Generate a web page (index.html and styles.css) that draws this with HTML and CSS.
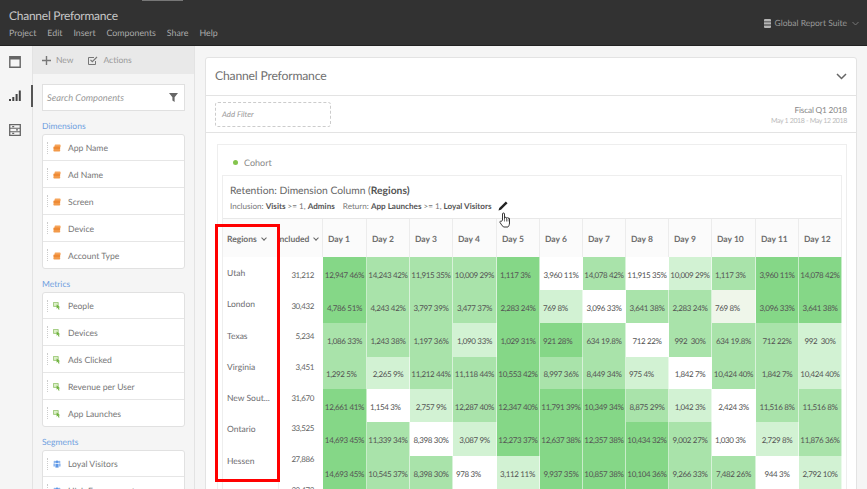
FILE: index.html
```html
<!DOCTYPE html>
<html lang="en">
<head>
    <meta charset="UTF-8">
    <title>Channel Preformance</title>
    <link rel="stylesheet" href="styles.css">
</head>
<body>

<svg class="sprites" width="0" height="0">
    <symbol id="i-dim" viewBox="0 0 10 10">
        <path d="M3 0.500h5.500a1 1 0 0 1 1 1v1.500a1 1 0 0 1-1 1H3a1 1 0 0 1-1-1V1.500a1 1 0 0 1 1-1z" fill="#f6a45a"/>
        <path d="M1.500 3.200h6.500a1 1 0 0 1 1 1v1.300a1 1 0 0 1-1 1H1.500a1 1 0 0 1-1-1V4.200a1 1 0 0 1 1-1z" fill="#ee8a35"/>
        <path d="M1.500 6.200h6.500a1 1 0 0 1 1 1v1.300a1 1 0 0 1-1 1H1.500a1 1 0 0 1-1-1V7.200a1 1 0 0 1 1-1z" fill="#f29a4a"/>
    </symbol>
    <symbol id="i-metric" viewBox="0 0 10 10">
        <path d="M0.500 0.500h6v5h-6z" fill="#dcefc8" stroke="#8cc063"/>
        <path d="M4.500 3l4.500 3.500-2 0.300 1.300 2.400-1.200 0.500-1.200-2.400-1.400 1.200z" fill="#6fb23e"/>
    </symbol>
    <symbol id="i-seg" viewBox="0 0 10 10">
        <circle cx="2.200" cy="2.500" r="1.500" fill="#8fb7ee"/>
        <circle cx="7.800" cy="2.500" r="1.500" fill="#8fb7ee"/>
        <circle cx="5" cy="2.300" r="1.800" fill="#5d97e6"/>
        <path d="M0.500 4.500h2v3.500h-2zM7.500 4.500h2v3.500h-2z" fill="#8fb7ee"/>
        <path d="M3 4.800h4v4.700H3z" fill="#5d97e6"/>
    </symbol>
</svg>

<div class="app">
    <header class="topbar">
        <span class="topbar-tab"></span>
        <div class="topbar-left">
            <div class="app-title">Channel Preformance</div>
            <nav class="menu">
                <span>Project</span>
                <span>Edit</span>
                <span>Insert</span>
                <span>Components</span>
                <span>Share</span>
                <span>Help</span>
            </nav>
        </div>
        <div class="suite">
            <svg width="7" height="9" viewBox="0 0 7 9"><path d="M1 0h5a1 1 0 0 1 1 1v1.500H0V1a1 1 0 0 1 1-1zM0 3.300h7v2.300H0zM0 6.400h7V8a1 1 0 0 1-1 1H1a1 1 0 0 1-1-1z" fill="#b5b5b5"/></svg>
            <span class="suite-name">Global Report Suite</span>
            <svg width="7" height="5" viewBox="0 0 7 5"><path d="M0.500 1l3 3 3-3" fill="none" stroke="#777" stroke-width="1"/></svg>
        </div>
    </header>

    <div class="workspace">
        <nav class="rail">
            <div class="rail-item">
                <svg width="12" height="12" viewBox="0 0 12 12"><path d="M0.800 0.800h10.400v10.400H0.800z" fill="none" stroke="#666" stroke-width="1.400"/><path d="M1 1h10v2.500H1z" fill="#666"/></svg>
            </div>
            <div class="rail-item rail-active">
                <svg width="12" height="12" viewBox="0 0 12 12"><path d="M0 9h2v2H0zM3.300 7h2v4h-2zM6.600 4h2v7h-2z" fill="#444"/><path d="M9.800 0.500h2V11h-2z" fill="#444"/></svg>
            </div>
            <div class="rail-item">
                <svg width="12" height="12" viewBox="0 0 12 12"><path d="M0.700 0.700h10.600v10.600H0.700z" fill="none" stroke="#666" stroke-width="1.300"/><path d="M1 4.200h10M1 7.800h10" stroke="#666" stroke-width="1.100"/><path d="M3.200 2h2v1.300h-2zM7 5.300h2v1.300H7zM3.200 8.800h2v1.300h-2z" fill="#666"/></svg>
            </div>
        </nav>

        <aside class="panel">
            <div class="panel-tools">
                <span class="tool">
                    <svg width="9" height="9" viewBox="0 0 9 9"><path d="M3.800 0h1.400v3.800H9v1.400H5.200V9H3.800V5.200H0V3.800h3.800z" fill="#777"/></svg>
                    New
                </span>
                <span class="tool">
                    <svg width="10" height="9" viewBox="0 0 10 9"><path d="M7.500 5v3.500h-7v-7H6" fill="none" stroke="#777"/><path d="M2.500 3.800l1.800 1.800L9 1" fill="none" stroke="#777" stroke-width="1.200"/></svg>
                    Actions
                </span>
            </div>
            <div class="panel-body">
                <div class="search">
                    <span>Search Components</span>
                    <svg width="9" height="9" viewBox="0 0 9 9"><path d="M0 0h9L5.600 4.200V9L3.400 7.500V4.200z" fill="#666"/></svg>
                </div>

                <div class="group-label">Dimensions</div>
                <div class="group">
                    <div class="item"><svg class="item-icon"><use href="#i-dim"/></svg>App Name</div>
                    <div class="item"><svg class="item-icon"><use href="#i-dim"/></svg>Ad Name</div>
                    <div class="item"><svg class="item-icon"><use href="#i-dim"/></svg>Screen</div>
                    <div class="item"><svg class="item-icon"><use href="#i-dim"/></svg>Device</div>
                    <div class="item"><svg class="item-icon"><use href="#i-dim"/></svg>Account Type</div>
                </div>

                <div class="group-label">Metrics</div>
                <div class="group">
                    <div class="item"><svg class="item-icon"><use href="#i-metric"/></svg>People</div>
                    <div class="item"><svg class="item-icon"><use href="#i-metric"/></svg>Devices</div>
                    <div class="item"><svg class="item-icon"><use href="#i-metric"/></svg>Ads Clicked</div>
                    <div class="item"><svg class="item-icon"><use href="#i-metric"/></svg>Revenue per User</div>
                    <div class="item"><svg class="item-icon"><use href="#i-metric"/></svg>App Launches</div>
                </div>

                <div class="group-label">Segments</div>
                <div class="group">
                    <div class="item"><svg class="item-icon"><use href="#i-seg"/></svg>Loyal Visitors</div>
                    <div class="item"><svg class="item-icon"><use href="#i-seg"/></svg>High Engagement</div>
                </div>
            </div>
        </aside>

        <main class="main">
            <section class="project">
                <div class="project-head">
                    <h1>Channel Preformance</h1>
                    <svg width="11" height="7" viewBox="0 0 11 7"><path d="M1 1l4.500 4.500L10 1" fill="none" stroke="#666" stroke-width="1.500"/></svg>
                </div>
                <div class="filter-row">
                    <div class="add-filter">Add Filter</div>
                    <div class="range">
                        <div class="range-name">Fiscal Q1 2018</div>
                        <div class="range-dates">May 1 2018 - May 12 2018</div>
                    </div>
                </div>

                <div class="cohort">
                    <div class="cohort-title"><span class="dot"></span>Cohort</div>
                    <div class="cohort-box">
                        <div class="retention">
                            <div class="retention-title">Retention: Dimension Column (<b>Regions)</b></div>
                            <div class="retention-sub">
                                Inclusion: <b>Visits</b> &gt;= 1, <b>Admins</b>
                                <span class="gap">Return:</span> <b>App Launches</b> &gt;= 1, <b>Loyal Visitors</b>
                                <svg class="pencil" width="10" height="10" viewBox="0 0 11 11"><path d="M8.600 0.500l1.900 1.900-7.200 7.200-2.800 0.900 0.900-2.800z" fill="#222"/></svg>
                            </div>
                        </div>

                        <div class="table">
                            <div class="col-regions">
                                <div class="th">Regions <i class="caret"></i></div>
                                <div class="region">Utah</div>
                                <div class="region">London</div>
                                <div class="region">Texas</div>
                                <div class="region">Virginia</div>
                                <div class="region">New Sout...</div>
                                <div class="region">Ontario</div>
                                <div class="region">Hessen</div>
                            </div>
                            <div class="col-included">
                                <div class="th th-included">Included <i class="caret"></i></div>
                                <div class="included">31,212</div>
                                <div class="included">30,432</div>
                                <div class="included">5,234</div>
                                <div class="included">3,451</div>
                                <div class="included">31,670</div>
                                <div class="included">33,525</div>
                                <div class="included">27,886</div>
                                <div class="included">32,473</div>
                            </div>
                            <div class="heat">
                                <div class="th">Day 1</div><div class="th">Day 2</div><div class="th">Day 3</div><div class="th">Day 4</div><div class="th">Day 5</div><div class="th">Day 6</div><div class="th">Day 7</div><div class="th">Day 8</div><div class="th">Day 9</div><div class="th">Day 10</div><div class="th">Day 11</div><div class="th">Day 12</div>

                                <div class="c g3">12,947 46%</div><div class="c g2">14,243 42%</div><div class="c g2">11,915 35%</div><div class="c g2">10,009 29%</div><div class="c g3 start">1,117 3%</div><div class="c">3,960 11%</div><div class="c g2">14,078 42%</div><div class="c">11,915 35%</div><div class="c g1">10,009 29%</div><div class="c g2 start">1,117 3%</div><div class="c g3">3,960 11%</div><div class="c g3">14,078 42%</div>

                                <div class="c g3">4,786 51%</div><div class="c g2">4,243 42%</div><div class="c g2">3,797 39%</div><div class="c g2">3,477 37%</div><div class="c g3">2,283 24%</div><div class="c g1 start">769 8%</div><div class="c">3,096 33%</div><div class="c g2">3,641 38%</div><div class="c g2">2,283 24%</div><div class="c g0 start">769 8%</div><div class="c g3">3,096 33%</div><div class="c g3">3,641 38%</div>

                                <div class="c g2">1,086 33%</div><div class="c g2">1,243 38%</div><div class="c g2">1,197 36%</div><div class="c g1">1,090 33%</div><div class="c g3">1,029 31%</div><div class="c g3 start">921 28%</div><div class="c g2">634 19.8%</div><div class="c">712 22%</div><div class="c g2">992&nbsp; 30%</div><div class="c g2">634 19.8%</div><div class="c g2">712 22%</div><div class="c g1">992&nbsp; 30%</div>

                                <div class="c g2 start">1,292 5%</div><div class="c g1">2,265 9%</div><div class="c g2">11,212 44%</div><div class="c g2">11,118 44%</div><div class="c g3">10,553 42%</div><div class="c g2">8,997 36%</div><div class="c g2">8,449 34%</div><div class="c g1 start">975 4%</div><div class="c">1,842 7%</div><div class="c g2">10,424 40%</div><div class="c g2">1,842 7%</div><div class="c g1">10,424 40%</div>

                                <div class="c g3">12,661 41%</div><div class="c start">1,154 3%</div><div class="c g1">2,757 9%</div><div class="c g2">12,287 40%</div><div class="c g3">12,347 40%</div><div class="c g3">11,791 39%</div><div class="c g3">10,349 34%</div><div class="c g2">8,875 29%</div><div class="c g1">1,042 3%</div><div class="c">2,424 3%</div><div class="c g2">11,516 8%</div><div class="c g2">11,516 8%</div>

                                <div class="c g3">14,693 45%</div><div class="c g2">11,339 34%</div><div class="c">8,398 30%</div><div class="c g1">3,087 9%</div><div class="c g3">12,273 37%</div><div class="c g3">12,637 38%</div><div class="c g3">12,357 38%</div><div class="c g3">10,434 32%</div><div class="c g2">9,002 27%</div><div class="c start">1,030 3%</div><div class="c g1">2,729 8%</div><div class="c g2">11,876 36%</div>

                                <div class="c g3">14,693 45%</div><div class="c g2">10,545 37%</div><div class="c g2">8,398 30%</div><div class="c start">978 3%</div><div class="c g1 start">3,112 11%</div><div class="c g3">9,937 35%</div><div class="c g3">10,857 38%</div><div class="c g3">10,104 36%</div><div class="c g2">9,266 33%</div><div class="c g2">7,482 26%</div><div class="c">944 3%</div><div class="c g1">2,792 10%</div>
                            </div>
                        </div>
                    </div>
                </div>
            </section>
        </main>
    </div>

    <!-- annotation laid over the screenshot -->
    <div class="callout"></div>
    <svg class="hand" width="12" height="16" viewBox="0 0 12 16"><path d="M3.500 8V2a1 1 0 0 1 2 0v4.500l0.500-1a1 1 0 0 1 1.500 0.300 1 1 0 0 1 1.500 0.400 1 1 0 0 1 1.500 0.800V11c0 2-1 3.500-1.500 4H4.500C3.500 14 1.800 12 1 10.500 0.600 9.500 1.800 8.600 2.600 9.300z" fill="#fff" stroke="#222" stroke-width="0.900"/><path d="M5.500 6.500v3M7.500 6v3.500M9 6.500v3" stroke="#222" stroke-width="0.600"/></svg>
</div>

</body>
</html>
```

FILE: styles.css
```css
* {
    box-sizing: border-box;
}
body {
    margin: 0;
    font-family: Lato, "Open Sans", sans-serif;
    color: #666;
    background-color: #f5f5f5;
    text-rendering: geometricPrecision;
}
.sprites {
    display: block;
    height: 0;
}
.app {
    position: relative;
    width: 867px;
    height: 489px;
    overflow: hidden;
    display: flex;
    flex-direction: column;
}

/* top bar */
.topbar {
    position: relative;
    height: 46px;
    flex: none;
    display: flex;
    justify-content: space-between;
    background-color: #323232;
    border-bottom: 1px solid #222;
    color: #bbb;
}
.topbar-tab {
    position: absolute;
    left: 142px;
    top: 0;
    width: 41px;
    height: 1px;
    background-color: #777;
}
.topbar-left {
    padding: 8px 0 0 9px;
}
.app-title {
    font-size: 12px;
    line-height: 15px;
    letter-spacing: -0.25px;
    color: #c8c8c8;
}
.menu {
    display: flex;
    gap: 11px;
    margin-top: 4px;
    font-size: 8.800px;
    line-height: 12px;
    color: #aaa;
}
.suite {
    display: flex;
    align-items: center;
    gap: 4px;
    height: 46px;
    padding: 0 8px 0 0;
    font-size: 8.500px;
    color: #999;
}
.suite-name {
    margin-right: 1px;
}

/* left side */
.workspace {
    flex: 1;
    display: flex;
    min-height: 0;
}
.rail {
    width: 33px;
    flex: none;
    padding-top: 5px;
    display: flex;
    flex-direction: column;
    gap: 12px;
    background-color: #f5f5f5;
    border-right: 1px solid #e3e3e3;
}
.rail-item {
    height: 22px;
    display: flex;
    align-items: center;
    padding-left: 9px;
}
.rail-active {
    border-right: 2px solid #555;
    margin-right: -1px;
}
.panel {
    width: 162px;
    flex: none;
    background-color: #f5f5f5;
    border-right: 1px solid #e3e3e3;
}
.panel-tools {
    height: 28px;
    display: flex;
    align-items: center;
    gap: 15px;
    padding-left: 9px;
    background-color: #e9e9e9;
    font-size: 8.500px;
    color: #999;
}
.tool {
    display: flex;
    align-items: center;
    gap: 5px;
}
.panel-body {
    padding: 10px 9px 0 9px;
}
.search {
    height: 27px;
    display: flex;
    align-items: center;
    justify-content: space-between;
    padding: 0 6px 0 4px;
    background-color: #fff;
    border: 1px solid #e0e0e0;
    font-size: 9.300px;
    font-style: italic;
    color: #999;
}
.group-label {
    margin-top: 8px;
    height: 15px;
    line-height: 15px;
    font-size: 8.500px;
    color: #6f9fe0;
}
.group {
    background-color: #fff;
    border: 1px solid #e1e1e1;
    border-radius: 3px;
}
.item {
    position: relative;
    height: 27px;
    display: flex;
    align-items: center;
    padding: 1px 0 0 10px;
    font-size: 8.600px;
    color: #777;
    border-bottom: 1px solid #e6e6e6;
}
.item:first-child {
    height: 26px;
}
.item:last-child {
    height: 26px;
    border-bottom: none;
}
.item::before {
    content: "";
    position: absolute;
    left: 4px;
    top: 7px;
    height: 12px;
    border-left: 1px dotted #ccc;
}
.item-icon {
    width: 8px;
    height: 8px;
    margin-right: 7px;
    flex: none;
}

/* main area */
.main {
    flex: 1;
    padding: 11px 10px 0 10px;
    min-width: 0;
}
.project {
    height: 500px;
    background-color: #fff;
    border: 1px solid #e3e3e3;
    border-radius: 3px;
}
.project-head {
    height: 38px;
    display: flex;
    align-items: center;
    justify-content: space-between;
    padding: 0 9px;
    border-bottom: 1px solid #e3e3e3;
}
.project-head h1 {
    margin: 0 0 2px;
    font-size: 12.200px;
    letter-spacing: -0.2px;
    font-weight: 400;
    color: #707070;
}
.filter-row {
    height: 37px;
    display: flex;
    align-items: center;
    justify-content: space-between;
    padding: 0 9px;
    border-bottom: 1px solid #e3e3e3;
}
.add-filter {
    width: 116px;
    height: 25px;
    line-height: 23px;
    padding-left: 6px;
    border: 1px dashed #ccc;
    border-radius: 3px;
    font-size: 7.800px;
    font-style: italic;
    color: #999;
}
.range {
    text-align: right;
    padding-top: 3px;
}
.range-name {
    font-size: 8.300px;
    letter-spacing: -0.2px;
    line-height: 11px;
    color: #888;
}
.range-dates {
    font-size: 7px;
    letter-spacing: -0.35px;
    line-height: 10px;
    color: #bbb;
}
.cohort {
    margin: 11px 9px 0 11px;
    height: 400px;
    border: 1px solid #eee;
}
.cohort-title {
    height: 30px;
    display: flex;
    align-items: center;
    padding: 4px 0 0 15px;
    font-size: 9px;
    color: #888;
}
.dot {
    width: 5px;
    height: 5px;
    margin-right: 6px;
    border-radius: 50%;
    background-color: #84c44d;
}
.cohort-box {
    margin: 0 4px;
    border: 1px solid #eee;
}
.retention {
    height: 43px;
    padding: 9px 0 0 7px;
    border-bottom: 1px solid #e8e8e8;
}
.retention-title {
    font-size: 10.300px;
    line-height: 13px;
    color: #666;
}
.retention-title b {
    color: #555;
}
.retention-sub {
    position: relative;
    margin-top: 3px;
    font-size: 8.100px;
    line-height: 11px;
    color: #777;
}
.retention-sub b {
    color: #555;
}
.gap {
    margin-left: 6px;
}
.pencil {
    position: absolute;
    left: 268px;
    top: 0;
}
.table {
    display: flex;
}
.th {
    height: 38px;
    display: flex;
    align-items: center;
    padding: 2px 0 0 5px;
    background-color: #fbfbfb;
    border-right: 1px solid #ececec;
    font-size: 8.500px;
    font-weight: 700;
    color: #6e6e6e;
    white-space: nowrap;
}
.col-regions {
    width: 56px;
    flex: none;
    border-right: 1px solid #eee;
}
.col-regions .th {
    padding-left: 4px;
}
.col-included {
    width: 44px;
    flex: none;
}
.th-included {
    margin-left: -2px;
    padding-left: 0;
}
.caret {
    display: inline-block;
    width: 4px;
    height: 4px;
    margin: 0 0 2px 5px;
    border-right: 1px solid #666;
    border-bottom: 1px solid #666;
    transform: rotate(45deg);
}
.region {
    height: 31.300px;
    line-height: 31px;
    padding: 1px 0 0 4px;
    font-size: 8.500px;
    color: #6c6c70;
}
.included {
    height: 30.700px;
    line-height: 30px;
    padding-right: 9px;
    text-align: right;
    font-size: 8px;
    letter-spacing: -0.4px;
    color: #666;
}
.th-included + .included {
    margin-top: 3px;
}
.heat {
    flex: none;
    display: grid;
    grid-template-columns: 44px 43px 43px 44px 43px 43px 43px 43px 43px 44px 43px 43px;
    grid-template-rows: 38px 33px 33px 34px 32px 33px 34px 34px;
}
.c {
    display: flex;
    align-items: center;
    justify-content: center;
    padding-top: 2px;
    background-color: #fff;
    border-right: 1px solid rgba(255, 255, 255, 0.55);
    font-size: 8px;
    letter-spacing: -0.35px;
    color: #555;
    white-space: nowrap;
}
.start {
    justify-content: flex-start;
    padding-left: 3px;
}
.g0 {
    background-color: #eff6ea;
}
.g1 {
    background-color: #d2f2d3;
}
.g2 {
    background-color: #a9e3aa;
}
.g3 {
    background-color: #85d787;
}

/* annotation */
.callout {
    position: absolute;
    left: 215px;
    top: 224px;
    width: 65px;
    height: 258px;
    border: 3px solid #f00;
}
.hand {
    position: absolute;
    left: 499px;
    top: 212px;
}
```
